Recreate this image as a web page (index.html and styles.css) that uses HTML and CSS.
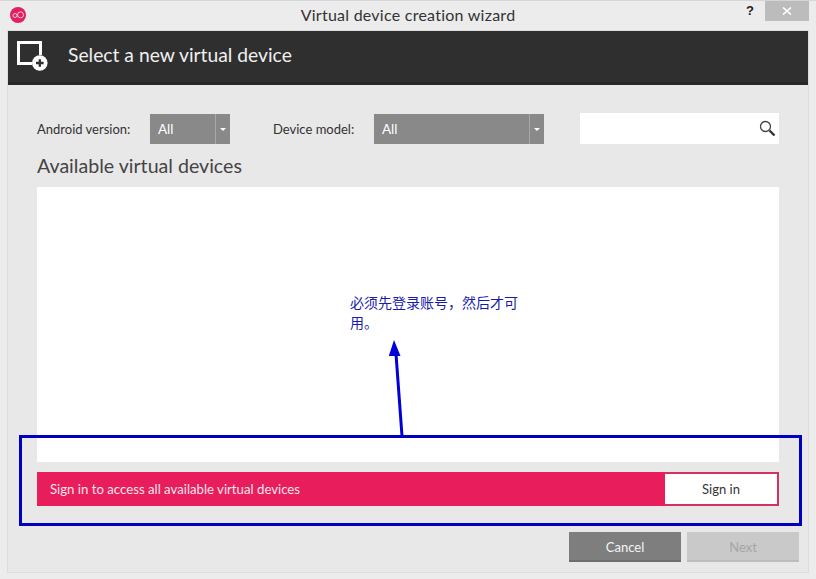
FILE: index.html
```html
<!DOCTYPE html>
<html lang="en">
<head>
<meta charset="utf-8">
<title>Virtual device creation wizard</title>
<link rel="stylesheet" href="styles.css">
</head>
<body>
<div class="window">
  <div class="titlebar">
    <svg class="app-icon" width="16" height="16" viewBox="0 0 16 16">
      <circle cx="8" cy="8" r="8" fill="#e0205f"/>
      <circle cx="5" cy="8.500" r="2" fill="none" stroke="#f6c8d6" stroke-width="1"/>
      <circle cx="10.500" cy="7.800" r="3" fill="none" stroke="#f6c8d6" stroke-width="1"/>
    </svg>
    <div class="title">Virtual device creation wizard</div>
    <div class="help">?</div>
    <div class="close">
      <svg width="10" height="8" viewBox="0 0 10 8"><path d="M1 .5 9 7.5M9 .5 1 7.5" stroke="#fff" stroke-width="1.6" fill="none"/></svg>
    </div>
  </div>
  <div class="panel">
    <div class="header">
      <svg class="header-icon" width="31" height="31" viewBox="0 0 31 31">
        <path d="M15 22.500H1.500V1.500H23.500V14" fill="none" stroke="#fff" stroke-width="3"/>
        <circle cx="22.800" cy="22" r="7.800" fill="#fff"/>
        <path d="M19 22h7.600M22.800 18.200v7.600" stroke="#2f2f2f" stroke-width="2.300"/>
      </svg>
      <div class="header-title">Select a new virtual device</div>
    </div>
    <div class="body">
      <div class="filters">
        <span class="label label-android">Android version:</span>
        <div class="select select-android"><span class="select-value">All</span><span class="select-arrow"></span></div>
        <span class="label label-model">Device model:</span>
        <div class="select select-model"><span class="select-value">All</span><span class="select-arrow"></span></div>
        <div class="search">
          <svg width="17" height="17" viewBox="0 0 17 17">
            <circle cx="6.500" cy="6.500" r="5" fill="none" stroke="#444" stroke-width="1.300"/>
            <path d="M10.500 10.500 15.500 15.500" stroke="#333" stroke-width="2.400"/>
          </svg>
        </div>
      </div>
      <h2 class="section-title">Available virtual devices</h2>
      <div class="list"></div>
      <div class="signin-bar">
        <span class="signin-text">Sign in to access all available virtual devices</span>
        <div class="signin-button">Sign in</div>
      </div>
      <div class="footer">
        <div class="btn btn-cancel">Cancel</div>
        <div class="btn btn-next">Next</div>
      </div>
    </div>
  </div>
  <div class="note">必须先登录账号，然后才可用。</div>
  <svg class="arrow" width="20" height="100" viewBox="0 0 20 100">
    <path d="M8 14 14 96" stroke="#0000d8" stroke-width="3" fill="none"/>
    <path d="M6 0 .8 16H12.500Z" fill="#0000d8"/>
  </svg>
  <div class="callout"></div>
</div>
</body>
</html>
```
FILE: styles.css
```css
* { box-sizing: border-box; }
html, body { margin: 0; padding: 0; }
body {
  width: 816px;
  height: 579px;
  overflow: hidden;
  background: #e9e9e9;
  font-family: Lato, "Noto Sans CJK SC", sans-serif;
}
.window {
  position: relative;
  width: 816px;
  height: 579px;
  display: flex;
  flex-direction: column;
  border-top: 1px solid #d6d6d6;
  background: #ececec;
}
.titlebar {
  height: 30px;
  padding-left: 10px;
  position: relative;
  display: flex;
  align-items: flex-start;
  flex: none;
}
.app-icon { margin-top: 6px; flex: none; }
.title {
  position: absolute;
  left: 0;
  right: 0;
  top: 4px;
  text-align: center;
  font-size: 16px;
  line-height: 20px;
  letter-spacing: 0.25px;
  color: #333;
}
.help {
  margin-left: auto;
  margin-right: 11px;
  font-family: "Liberation Sans", sans-serif;
  font-weight: bold;
  font-size: 13px;
  line-height: 19px;
  color: #222;
}
.close {
  width: 44px;
  height: 20px;
  margin-right: 7px;
  background: #bcbcbc;
  display: flex;
  align-items: center;
  justify-content: center;
}
.panel {
  margin: 0 8px 7px;
  flex: 1;
  display: flex;
  flex-direction: column;
  background: #e8e8e8;
  outline: 1px solid #dcdcdc;
}
.header {
  height: 54px;
  background: #2f2f2f;
  border-bottom: 3px solid #282828;
  display: flex;
  align-items: center;
  padding-left: 9px;
  flex: none;
}
.header-icon { flex: none; }
.header-title {
  margin-left: 20px;
  margin-bottom: 3px;
  color: #f0f0f0;
  font-size: 19.300px;
  line-height: 26px;
}
.body {
  flex: 1;
  padding: 29px 29px 0;
  display: flex;
  flex-direction: column;
}
.filters {
  height: 30px;
  display: flex;
  align-items: center;
  flex: none;
}
.label {
  font-size: 13px;
  color: #333;
  white-space: nowrap;
}
.label-android { width: 113px; }
.label-model { width: 101px; margin-left: 43px; }
.select {
  height: 30px;
  background: #898989;
  color: #fff;
  display: flex;
  align-items: center;
  justify-content: space-between;
  font-size: 13.500px;
  line-height: 30px;
}
.select-android { width: 80px; }
.select-model { width: 170px; }
.select-value { padding-left: 8px; height: 30px; }
.select-arrow {
  width: 15px;
  height: 30px;
  border-left: 1px solid #a8a8a8;
  position: relative;
}
.select-arrow::after {
  content: "";
  position: absolute;
  left: 4px;
  top: 14px;
  border-left: 3px solid transparent;
  border-right: 3px solid transparent;
  border-top: 3px solid #fff;
}
.search {
  width: 199px;
  height: 31px;
  margin-left: 36px;
  margin-top: -1px;
  background: #fff;
  display: flex;
  align-items: center;
  justify-content: flex-end;
  padding-right: 3px;
}
.section-title {
  margin: 8px 0 0;
  height: 35px;
  font-weight: 400;
  font-size: 19.600px;
  line-height: 28px;
  color: #444;
  flex: none;
}
.list {
  height: 275px;
  background: #fff;
  flex: none;
}
.signin-bar {
  margin-top: 10px;
  height: 34px;
  background: #e71d5c;
  display: flex;
  align-items: stretch;
  justify-content: space-between;
  flex: none;
}
.signin-text {
  padding-left: 13px;
  color: #fbe4ec;
  font-size: 13.200px;
  line-height: 34px;
}
.signin-button {
  width: 114px;
  background: #fff;
  border: 2px solid #d5305f;
  border-left: 0;
  font-size: 13px;
  line-height: 30px;
  text-align: center;
  color: #333;
}
.footer {
  margin: 26px -20px 0 0;
  display: flex;
  justify-content: flex-end;
  gap: 6px;
  flex: none;
}
.btn {
  width: 112px;
  height: 30px;
  font-size: 13px;
  line-height: 31px;
  text-align: center;
}
.btn-cancel {
  background: #7e7e7e;
  border-bottom: 2px solid #6e6e6e;
  color: #f4f4f4;
}
.btn-next {
  background: #c9c9c9;
  border-bottom: 2px solid #bdbdbd;
  color: #a5a5a5;
}
.note {
  position: absolute;
  left: 350px;
  top: 291px;
  width: 170px;
  font-family: "Noto Sans CJK SC", sans-serif;
  font-size: 14px;
  line-height: 20px;
  color: #1a1aa8;
}
.arrow {
  position: absolute;
  left: 388px;
  top: 339px;
}
.callout {
  position: absolute;
  left: 19px;
  top: 434px;
  width: 783px;
  height: 91px;
  border: 3px solid #0000c0;
}
```
